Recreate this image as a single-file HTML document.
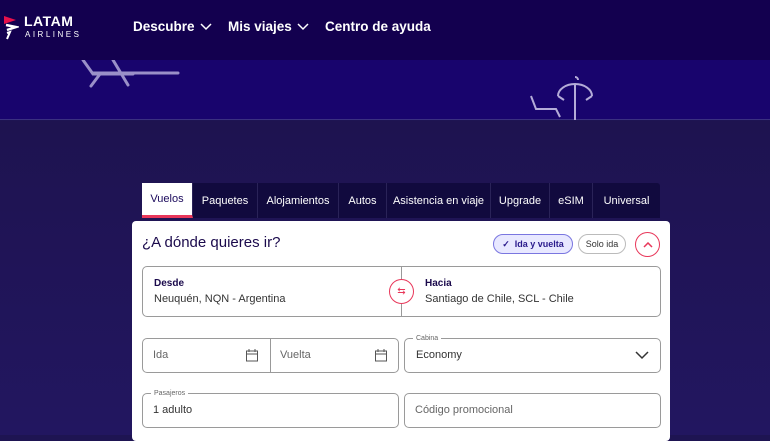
<!DOCTYPE html>
<html><head><meta charset="utf-8"><style>
*{box-sizing:border-box;margin:0;padding:0}
body{width:770px;height:435px;overflow:hidden;font-family:"Liberation Sans",sans-serif;background:#1e1452;position:relative}
.hdr{position:absolute;left:0;top:0;width:770px;height:60px;background:#13004f;color:#fff}
.band{position:absolute;left:0;top:60px;width:770px;height:60px;background:#18046d;border-bottom:1px solid #3a3080}
.low{position:absolute;left:0;top:121px;width:770px;height:314px;background:linear-gradient(#1e1350,#221660)}
.nav{position:absolute;top:19px;font-size:13.5px;font-weight:bold}
.nav svg{margin-left:5px;vertical-align:middle}
.tabs{position:absolute;left:142px;top:183px;width:518px;height:35px;background:#110a3e;display:flex;border-radius:3px 3px 0 0}
.tab{color:#fff;font-size:11px;display:flex;align-items:center;justify-content:center;border-right:1px solid #2a2358;height:35px}
.tab.on{background:#fff;color:#1b0a5c;border-bottom:3px solid #e8375a}
.panel{position:absolute;left:132px;top:221px;width:538px;height:220px;background:#fff;border-radius:4px}
.box{position:absolute;border:1px solid #9a9a9a;border-radius:5px;background:#fff}
.lbl{position:absolute;font-size:11px;color:#333}
.small{position:absolute;font-size:7px;color:#666;background:#fff;padding:0 3px}
</style></head><body>
<div class="hdr">
 <svg style="position:absolute;left:3px;top:14px" width="16" height="26" viewBox="0 0 16 26"><path d="M1 2l12 4-12 4z" fill="#e8114b"/><path d="M3 11l10 2-9 3" stroke="#fff" stroke-width="2.5" fill="none"/><path d="M4 19l3-1-3 7" stroke="#fff" stroke-width="2" fill="none"/></svg>
 <div style="position:absolute;left:24px;top:13px;font-size:14px;font-weight:bold;letter-spacing:.5px">LATAM</div>
 <div style="position:absolute;left:25px;top:30px;font-size:8px;letter-spacing:2.5px">AIRLINES</div>
 <div class="nav" style="left:133px">Descubre<svg width="12" height="8"><path d="M1 1l5 5 5-5" stroke="#fff" stroke-width="1.5" fill="none"/></svg></div>
 <div class="nav" style="left:228px">Mis viajes<svg width="12" height="8"><path d="M1 1l5 5 5-5" stroke="#fff" stroke-width="1.5" fill="none"/></svg></div>
 <div class="nav" style="left:325px">Centro de ayuda</div>
</div>
<div class="band">
 <svg style="position:absolute;left:75px;top:0" width="110" height="30"><path d="M8 0l10 14h40M25 14l-9 12M38 0l15 25M18 13h85" stroke="#9a90c8" stroke-width="3" fill="none" stroke-linecap="round"/></svg>
 <svg style="position:absolute;left:528px;top:16px" width="80" height="45"><path d="M30 20a17 12 0 0 1 34 0 M64 20l-6 4M30 20l6 4M47 8v36M3 20l5 13h20l4 8M47 1a3 3 0 0 1 3 3" stroke="#b4acd8" stroke-width="2" fill="none"/></svg>
</div>
<div class="low"></div>
<div class="tabs">
 <div class="tab on" style="width:51px">Vuelos</div>
 <div class="tab" style="width:65px">Paquetes</div>
 <div class="tab" style="width:81px">Alojamientos</div>
 <div class="tab" style="width:48px">Autos</div>
 <div class="tab" style="width:104px">Asistencia en viaje</div>
 <div class="tab" style="width:59px">Upgrade</div>
 <div class="tab" style="width:43px">eSIM</div>
 <div class="tab" style="width:67px;border:0">Universal</div>
</div>
<div class="panel">
 <div style="position:absolute;left:10px;top:13px;font-size:15px;color:#1b0a4c">¿A dónde quieres ir?</div>
 <div style="position:absolute;left:361px;top:13px;width:80px;height:20px;border:1px solid #7a76e0;background:#e8e8ff;border-radius:10px;font-size:9px;color:#2a1a8c;font-weight:bold;line-height:18px;text-align:center">✓&nbsp; Ida y vuelta</div>
 <div style="position:absolute;left:446px;top:13px;width:48px;height:20px;border:1px solid #bbb;border-radius:10px;font-size:9px;color:#333;line-height:18px;text-align:center">Solo ida</div>
 <div style="position:absolute;left:503px;top:11px;width:25px;height:25px;border:1px solid #e8375a;border-radius:50%"><svg style="position:absolute;left:7px;top:9px" width="10" height="6"><path d="M1 5l4-4 4 4" stroke="#e8375a" stroke-width="1.5" fill="none"/></svg></div>
 <div class="box" style="left:10px;top:45px;width:519px;height:51px"></div>
 <div style="position:absolute;left:269px;top:46px;width:1px;height:49px;background:#999"></div>
 <div style="position:absolute;left:257px;top:58px;width:25px;height:25px;border:1px solid #e8375a;border-radius:50%;background:#fff;color:#e8375a;font-size:10px;text-align:center;line-height:23px">⇆</div>
 <div class="lbl" style="left:22px;top:57px;font-weight:bold;font-size:10px;color:#1b0a4c">Desde</div>
 <div class="lbl" style="left:22px;top:72px">Neuquén, NQN - Argentina</div>
 <div class="lbl" style="left:293px;top:57px;font-weight:bold;font-size:10px;color:#1b0a4c">Hacia</div>
 <div class="lbl" style="left:293px;top:72px">Santiago de Chile, SCL - Chile</div>
 <div class="box" style="left:10px;top:117px;width:257px;height:35px"></div>
 <div style="position:absolute;left:138px;top:118px;width:1px;height:33px;background:#999"></div>
 <div class="lbl" style="left:21px;top:128px;color:#666">Ida</div>
 <div class="lbl" style="left:148px;top:128px;color:#666">Vuelta</div>
 <svg style="position:absolute;left:113px;top:127px" width="14" height="14"><rect x="1.5" y="3" width="11" height="10" fill="none" stroke="#555"/><path d="M1.5 6h11M4 1v3M10 1v3" stroke="#555"/></svg>
 <svg style="position:absolute;left:242px;top:127px" width="14" height="14"><rect x="1.5" y="3" width="11" height="10" fill="none" stroke="#555"/><path d="M1.5 6h11M4 1v3M10 1v3" stroke="#555"/></svg>
 <div class="box" style="left:272px;top:117px;width:257px;height:35px"></div>
 <div class="small" style="left:281px;top:114px">Cabina</div>
 <div class="lbl" style="left:284px;top:128px">Economy</div>
 <svg style="position:absolute;left:503px;top:129px" width="14" height="10"><path d="M1 2l6 6 6-6" stroke="#333" stroke-width="1.5" fill="none"/></svg>
 <div class="box" style="left:10px;top:172px;width:257px;height:35px"></div>
 <div class="small" style="left:19px;top:169px">Pasajeros</div>
 <div class="lbl" style="left:21px;top:183px">1 adulto</div>
 <div class="box" style="left:272px;top:172px;width:257px;height:35px"></div>
 <div class="lbl" style="left:283px;top:183px;color:#666">Código promocional</div>
</div>
</body></html>
